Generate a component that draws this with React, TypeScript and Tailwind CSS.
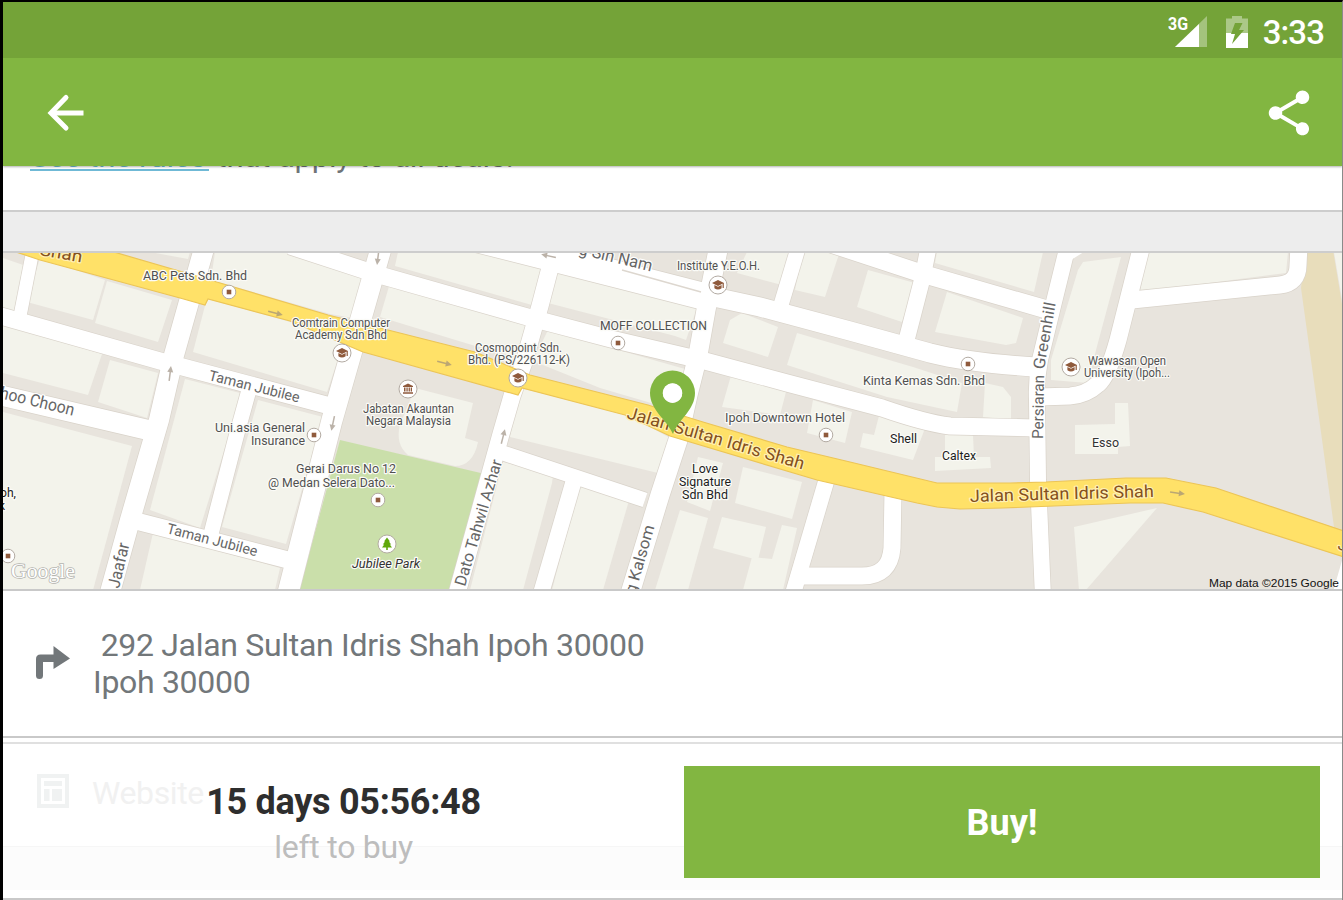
import { MdShare } from "react-icons/md";

const BUILDINGS = [
  "3,258 26,266 14,313 3,310",
  "40,258 105,280 93,320 27,302",
  "107,281 172,300 158,342 95,323",
  "150,252 190,252 188,259",
  "215,252 285,252 365,276 353,318 330,314 211,280",
  "207,298 345,338 327,392 193,352",
  "3,325 102,354 88,395 3,373",
  "110,360 158,373 147,418 98,402",
  "185,379 240,393 232,425 200,528 150,510",
  "258,400 323,417 286,544 222,527",
  "3,412 132,446 93,590 3,590",
  "153,533 280,568 275,590 140,590",
  "398,252 493,252 542,265 532,305 395,266",
  "390,283 528,325 518,357 472,345 380,317",
  "558,265 697,308 686,340 675,336 548,303",
  "548,330 685,369 675,410 600,388 533,361",
  "520,388 625,413 670,438 658,473 510,437",
  "503,462 553,475 552,483 523,590 470,590",
  "580,483 630,497 603,590 552,590",
  "680,510 708,518 688,590 655,590",
  "743,467 802,482 792,519 735,503",
  "722,517 766,527 758,560 713,548",
  "782,525 797,528 783,590 743,590 752,557 772,559",
  "698,457 723,463 710,511 687,502",
  "747,252 790,252 782,285 737,273",
  "803,252 840,252 837,260 825,297 795,290",
  "868,270 915,283 902,322 857,307",
  "947,292 1023,318 1016,343 1006,345 935,332",
  "937,252 1043,252 1034,292 935,263",
  "742,313 778,327 768,357 723,343 730,320",
  "797,333 913,367 962,383 957,412 887,397 787,365",
  "985,383 1003,387 1011,397 1011,420 983,417",
  "732,372 787,388 780,415 722,407",
  "813,400 852,412 845,443 807,433",
  "880,412 927,423 913,460 860,447 863,433 874,435",
  "945,435 973,435 974,457 990,457 991,468 935,471 935,457 945,457",
  "1075,425 1115,424 1115,403 1128,403 1130,446 1118,447 1118,454 1075,454",
  "1074,527 1157,508 1086,590 1079,590",
  "1083,262 1121,257 1096,350 1088,383 1051,380 1051,360 1078,270",
  "1148,252 1288,252 1286,273 1140,292",
  "1334,252 1343,252 1343,305",
];

const ROADS = [
  { d: "M-10,313 L160,361 L330,406", w: 17 },
  { d: "M-10,393 L148,430", w: 20 },
  { d: "M205,245 L174,355 L159,420 L130,520 L109,596", w: 20 },
  { d: "M34,245 L20,316", w: 13 },
  { d: "M136,521 L288,560", w: 17 },
  { d: "M249,390 L236,437 L211,534", w: 15 },
  { d: "M382,245 L362,315 L350,357 L332,420 L287,597", w: 21 },
  { d: "M290,246 L376,274 L531,318 L611,339 L705,361 L787,383 L882,408 Q925,423 950,426 L1036,428", w: 17 },
  { d: "M556,245 L540,306 L524,362 L512,396 L501,434 L456,597", w: 17 },
  { d: "M503,453 L645,500", w: 15 },
  { d: "M574,480 L540,597", w: 16 },
  { d: "M719,245 L706,310 L698,355 L688,395 L678,440 L660,495 L629,597", w: 19 },
  { d: "M470,237 L620,275 L710,298", w: 27 },
  { d: "M700,294 L760,307 L850,331 L930,353 Q970,363 1036,367", w: 19 },
  { d: "M820,240 L923,274 L1045,309", w: 18 },
  { d: "M799,245 L781,305", w: 15 },
  { d: "M929,245 L922,280 L906,342", w: 16 },
  { d: "M1068,245 L1052,310 L1040,360 Q1036,380 1037,400 L1038,480 L1043,597", w: 16 },
  { d: "M1142,245 L1118,340 Q1108,376 1098,384 Q1086,395 1070,396 L1040,397", w: 17 },
  { d: "M1132,300 L1280,285 Q1298,283 1298,265 L1299,245", w: 17 },
  { d: "M828,475 L792,597", w: 16 },
  { d: "M893,492 L892,548 Q890,576 862,576 L800,576", w: 17 },
];

const HIGHWAY =
  "10,250 107,250 210,280 328,315 388,330 475,352 530,375 648,405 703,422 787,447 850,462 937,483 1010,483 1046,482 1126,478 1166,478 1216,488 1350,533 1350,559 1203,512 1163,503 1130,503 1003,508 960,509 937,507 917,503 817,480 670,436 625,415 522,388 518,395 363,352 290,321 208,299 205,305 180,298 40,260";

type Label = {
  t: string;
  x: number;
  y: number;
  w: number;
  s?: number;
  c?: string;
  r?: number;
  italic?: boolean;
};

// x / y is the start of the baseline, w the drawn length
const PLACES: Label[] = [
  { t: "ABC Pets Sdn. Bhd", x: 143, y: 280, w: 104 },
  { t: "Comtrain Computer", x: 292, y: 327, w: 98 },
  { t: "Academy Sdn Bhd", x: 295, y: 339, w: 92 },
  { t: "Cosmopoint Sdn.", x: 475, y: 352, w: 87 },
  { t: "Bhd. (PS/226112-K)", x: 468, y: 364, w: 102 },
  { t: "Institute Y.E.O.H.", x: 677, y: 270, w: 83 },
  { t: "MOFF COLLECTION", x: 600, y: 330, w: 107 },
  { t: "Kinta Kemas Sdn. Bhd", x: 863, y: 385, w: 122 },
  { t: "Wawasan Open", x: 1088, y: 365, w: 78 },
  { t: "University (Ipoh...", x: 1084, y: 377, w: 86 },
  { t: "Jabatan Akauntan", x: 363, y: 413, w: 91 },
  { t: "Negara Malaysia", x: 366, y: 425, w: 85 },
  { t: "Uni.asia General", x: 215, y: 432, w: 90 },
  { t: "Insurance", x: 251, y: 445, w: 54 },
  { t: "Gerai Darus No 12", x: 296, y: 473, w: 100 },
  { t: "@ Medan Selera Dato...", x: 268, y: 487, w: 127 },
  { t: "Ipoh Downtown Hotel", x: 725, y: 422, w: 120 },
  { t: "Love", x: 692, y: 473, w: 26, c: "#1c1c1c" },
  { t: "Signature", x: 679, y: 486, w: 52, c: "#1c1c1c" },
  { t: "Sdn Bhd", x: 682, y: 499, w: 46, c: "#1c1c1c" },
  { t: "Shell", x: 890, y: 443, w: 27, c: "#1c1c1c" },
  { t: "Caltex", x: 942, y: 460, w: 34, c: "#1c1c1c" },
  { t: "Esso", x: 1092, y: 447, w: 27, c: "#333" },
  { t: "oh,", x: 0, y: 497, w: 16, c: "#1c1c1c" },
  { t: "k", x: -1, y: 510, w: 6, c: "#1c1c1c" },
  { t: "Jubilee Park", x: 352, y: 568, w: 68, c: "#333", italic: true },
];

const STREETS: Label[] = [
  { t: "Taman Jubilee", x: 208, y: 380, w: 93, s: 14.5, r: 14 },
  { t: "Taman Jubilee", x: 166, y: 533, w: 93, s: 14.5, r: 14.5 },
  { t: "hoo Choon", x: -1, y: 398, w: 76, s: 17, r: 13.5 },
  { t: "Jaafar", x: 119, y: 589, w: 46, s: 17, r: -77 },
  { t: "Dato Tahwil Azhar", x: 465, y: 587, w: 131, s: 16, r: -73.5 },
  { t: "g Kalsom", x: 635, y: 595, w: 71, s: 16, r: -74 },
  { t: "g Sin Nam", x: 578, y: 254, w: 75, s: 17, r: 13.5 },
  { t: "Persiaran", x: 1043, y: 439, w: 64, s: 15.5, r: -89 },
  { t: "Greenhill", x: 1044, y: 370, w: 68, s: 16, r: -80 },
];

const ROUTE_NAMES: Label[] = [
  { t: "Shah", x: 39, y: 255, w: 43, s: 17, r: 10 },
  { t: "Jalan Sultan Idris Shah", x: 626, y: 418, w: 184, s: 17, r: 16.3 },
  { t: "Jalan Sultan Idris Shah", x: 970, y: 502, w: 184, s: 17, r: -1.6 },
  { t: "J", x: 1337, y: 549, w: 9, s: 17, r: 15 },
];

const POIS: [number, number, string][] = [
  [229, 292, "dot"],
  [314, 435, "dot"],
  [378, 500, "dot"],
  [618, 343, "dot"],
  [826, 435, "dot"],
  [968, 364, "dot"],
  [8, 556, "dot"],
  [342, 353, "school"],
  [518, 378, "school"],
  [718, 285, "school"],
  [1071, 367, "school"],
  [408, 389, "civic"],
  [387, 544, "tree"],
];

const ARROWS: [number, number, number][] = [
  [275, 313, 14],
  [444, 363, 14],
  [1177, 493, 8],
  [170, 374, -83],
  [378, 257, 97],
  [549, 256, 192],
  [333, 423, 102],
  [503, 437, -76],
];

function MapText({ items, color, halo }: { items: Label[]; color: string; halo: string }) {
  return (
    <g stroke={halo} strokeWidth={2.4} strokeLinejoin="round" style={{ paintOrder: "stroke" }}>
      {items.map((l, i) => (
        <text
          key={i}
          x={l.x}
          y={l.y}
          fill={l.c ?? color}
          fontSize={l.s ?? 12}
          fontStyle={l.italic ? "italic" : "normal"}
          textLength={l.w}
          lengthAdjust="spacingAndGlyphs"
          transform={l.r ? `rotate(${l.r} ${l.x} ${l.y})` : undefined}
        >
          {l.t}
        </text>
      ))}
    </g>
  );
}

function Poi({ x, y, kind }: { x: number; y: number; kind: string }) {
  return (
    <g transform={`translate(${x} ${y})`}>
      <circle r={kind === "dot" ? 6.8 : 9} fill="#fff" stroke="#b3aba3" strokeWidth={1} />
      {kind === "dot" && <rect x={-2.3} y={-2.3} width={4.6} height={4.6} fill="#8f5a3c" />}
      {kind === "school" && (
        <g fill="#8f5a3c">
          <path d="M0,-5 L6,-2 L0,1 L-6,-2Z" />
          <path d="M-3.6,0 L0,1.8 L3.6,0 V3.2 Q0,5.6 -3.6,3.2Z" />
          <path d="M4.6,-2 h1.2 v5 h-1.2z" />
        </g>
      )}
      {kind === "civic" && (
        <g fill="#8f5a3c">
          <path d="M0,-5.6 L5,-3 V-2 H-5 V-3Z" />
          <path d="M-4,-1.4 h1.5 v4 h-1.5z M-1.6,-1.4 h1.3 v4 h-1.3z M.6,-1.4 h1.3 v4 h-1.3z M2.7,-1.4 h1.3 v4 h-1.3z M-5,3.2 h10 v1.6 h-10z" />
        </g>
      )}
      {kind === "tree" && (
        <path d="M0,-6.5 L3,-2.5 H1.9 L4.2,.5 H2.8 L5,3.4 H.8 V6 H-.8 V3.4 H-5 L-2.8,.5 H-4.2 L-1.9,-2.5 H-3Z" fill="#5fa80a" />
      )}
    </g>
  );
}

function CityMap() {
  return (
    <svg className="block h-full w-full" viewBox="3 253 1339 336" preserveAspectRatio="none" fontFamily="Roboto, sans-serif">
      <rect x="0" y="250" width="1345" height="345" fill="#e8e4dd" />
      <polygon points="1306,250 1333,250 1343,310 1343,540 1334,527 1320,425 1301,288" fill="#e8ddbb" />
      <polygon points="340,440 485,474 450,595 298,595" fill="#cadfaa" />
      <g fill="#f3f3eb">
        {BUILDINGS.map((p) => (
          <polygon key={p} points={p} />
        ))}
        <path d="M415,388 L473,403 L465,438 L478,442 Q473,466 455,466 L408,455 Q395,444 400,425Z" />
      </g>
      <g fill="none" stroke="#d9d3ca">
        {ROADS.map((r) => (
          <path key={r.d} d={r.d} strokeWidth={r.w + 1.4} />
        ))}
      </g>
      <g fill="none" stroke="#fff">
        {ROADS.map((r) => (
          <path key={r.d} d={r.d} strokeWidth={r.w} />
        ))}
      </g>
      <polygon points="1343,557 1333,592 1343,592" fill="#fff" />
      <polygon points="1070,250 1087,250 1071,260" fill="#fff" />
      <path d="M622,270 L701,292" stroke="#ddd7cf" strokeWidth="1.4" />
      <polygon points={HIGHWAY} fill="#ffe168" stroke="#ecc557" strokeWidth="1.2" />
      {ARROWS.map(([x, y, r]) => (
        <g key={`${x}-${y}`} transform={`translate(${x} ${y}) rotate(${r})`} opacity=".65">
          <path d="M-7,0 H3" stroke="#97897a" strokeWidth="1.5" />
          <path d="M2,-3 L8,0 L2,3Z" fill="#97897a" />
        </g>
      ))}
      <MapText items={STREETS} color="#666666" halo="#ffffff" />
      <MapText items={ROUTE_NAMES} color="#84501c" halo="#fff0b4" />
      {POIS.map(([x, y, kind]) => (
        <Poi key={`${x}-${y}`} x={x} y={y} kind={kind} />
      ))}
      <MapText items={PLACES} color="#505050" halo="#fbfbf7" />
      <path
        fillRule="evenodd"
        fill="#82b641"
        d="M673,434 C667,420 650,410 650,393 A22.3,22.3 0 0 1 695,393 C695,410 678,420 673,434Z M672.5,383.5 a9.7,9.7 0 1 0 .01,0Z"
      />
      <circle cx="672.5" cy="393" r="9.7" fill="#fff" />
      <text
        x="11"
        y="578"
        fontSize="22"
        fontFamily="'Liberation Serif', serif"
        textLength="64"
        lengthAdjust="spacingAndGlyphs"
        fill="#fff"
        stroke="#b5b5b0"
        strokeWidth="1.6"
        style={{ paintOrder: "stroke" }}
      >
        Google
      </text>
      <text
        x="1209"
        y="587"
        fontSize="11.5"
        fontFamily="'Liberation Sans', sans-serif"
        textLength="130"
        lengthAdjust="spacingAndGlyphs"
        fill="#111"
      >
        Map data ©2015 Google
      </text>
    </svg>
  );
}

function StatusBar() {
  return (
    <div className="flex h-14 items-start justify-end bg-[#74a338] pr-[18px] text-white">
      <svg className="mt-3 h-9 w-10" viewBox="0 0 40 36">
        <path d="M7,33 L39,2 V33Z" fill="#fff" opacity=".35" />
        <path d="M7,33 L31,10 V33Z" fill="#fff" />
        <text x="0" y="15.500" fontSize="18" fontWeight="700" fontFamily="Roboto, sans-serif" textLength="20" lengthAdjust="spacingAndGlyphs" fill="#fff" stroke="#74a338" strokeWidth="2" style={{ paintOrder: "stroke" }}>
          3G
        </text>
      </svg>
      <svg className="ml-[18px] mt-3 h-9 w-[22px]" viewBox="0 0 22 36">
        <path d="M0,4.500 H6 V2 H16 V4.500 H22 V19 H0Z" fill="#fff" opacity=".4" />
        <path d="M0,19 H22 V34 H0Z" fill="#fff" />
        <path d="M9,9 H16.500 L13,16 H18 L6,30 L9,20 H5Z" fill="#74a338" />
      </svg>
      <span className="ml-[15px] mt-[13px] text-[33px] leading-9 font-medium tracking-[-0.9px]">3:33</span>
    </div>
  );
}

export default function App() {
  return (
    <div className="flex h-[900px] w-[1343px] flex-col overflow-hidden border-t-2 border-r border-l-[3px] border-t-black border-r-[#8a8a8a] border-l-black bg-white font-['Roboto',sans-serif]">
      <header className="relative z-10 shrink-0 shadow-[0_1px_2px_rgba(0,0,0,0.3)]">
        <StatusBar />
        <div className="flex h-[108px] items-center justify-between bg-[#82b641] pr-[26px] pl-11 text-white">
          <svg className="h-10 w-10" viewBox="0 0 40 40" fill="none" stroke="#fff" strokeWidth="5">
            <path d="M4,21 H36.500" />
            <path d="M19,5.500 L4,21 L19,36" strokeLinecap="round" strokeLinejoin="miter" />
          </svg>
          <MdShare size={54} className="mt-0.5" />
        </div>
      </header>

      {/* 規約の行は半分ヘッダーの下に隠れる */}
      <section className="h-11 shrink-0">
        <p className="-mt-[27px] pl-[27px] text-[31px] leading-9 tracking-[-0.15px] whitespace-nowrap text-[#6f7478]">
          <span className="inline-block h-8 w-[179px] border-b-2 border-[#6fb9d6] text-[#6fb9d6]">See the rules</span> that apply to all deals.
        </p>
      </section>

      <div className="h-[43px] shrink-0 border-y-2 border-[#cdcdcd] bg-[#ededed]" />

      <div className="h-[336px] shrink-0 overflow-hidden">
        <CityMap />
      </div>

      <section className="flex h-[149px] shrink-0 border-y-2 border-[#c9c9c9] pl-[33px]">
        <svg className="mt-[55px] h-[34px] w-[34px]" viewBox="0 0 34 34" fill="#72777a">
          <path d="M0,32 V13 Q0,8.500 4.500,8.500 H17.500 V0 L34,12.500 L17.500,23 V16 H7 V29.500 Q7,33 3.500,33 Q0,33 0,29.500Z" />
        </svg>
        <p className="mt-[36px] ml-[23px] text-[32px] leading-[37px] tracking-[-0.31px] whitespace-pre text-[#72777a]">
          {" 292 Jalan Sultan Idris Shah Ipoh 30000\nIpoh 30000"}
        </p>
      </section>

      <section className="relative mt-1 flex h-[158px] shrink-0 flex-col border-y-2 border-t-[#e0e0e0] border-b-[#c9c9c9]">
        <div className="flex h-[102px] shrink-0 items-start pl-[34px]">
          <svg className="mt-[30px] h-[34px] w-8" viewBox="0 0 32 34" fill="#f0f2f2">
            <path fillRule="evenodd" d="M0,0 H32 V34 H0Z M4,4 V30 H28 V4Z" />
            <path d="M7,7 H25 V12 H7Z M7,15 H12.500 V27 H7Z M15,15 H25 V27 H15Z" />
          </svg>
          <span className="mt-[31px] ml-[23px] text-[32px] leading-[37px] tracking-[-0.4px] text-[#f1f1f1]">Website</span>
        </div>
        <div className="h-11 border-t border-[#f6f6f6] bg-[#fcfcfc]" />

        <div className="absolute inset-0 flex pt-[22px] pr-[22px] pb-5">
          <div className="flex w-[681px] flex-col items-center pt-[15px]">
            <span className="text-[36px] leading-[42px] font-bold tracking-[-0.3px] text-[#2e2e2e]">15 days 05:56:48</span>
            <span className="mt-[5px] text-[32px] leading-[38px] tracking-[-0.25px] text-[#bdbdbd]">left to buy</span>
          </div>
          <button className="h-[112px] flex-1 bg-[#82b641] pt-0.5 text-[36px] font-bold text-white">Buy!</button>
        </div>
      </section>
    </div>
  );
}
